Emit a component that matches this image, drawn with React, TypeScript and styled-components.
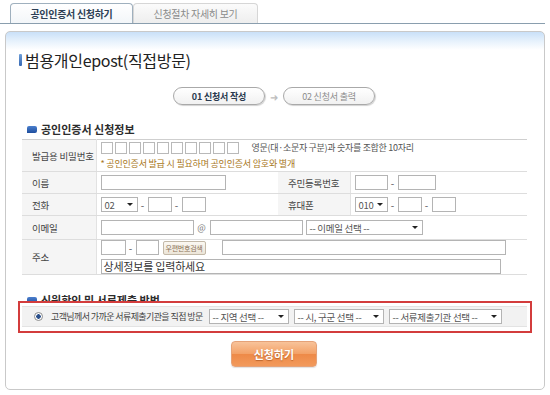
import React from 'react'
import styled, { createGlobalStyle } from 'styled-components'

const GlobalStyle = createGlobalStyle`
  html, body {
    margin: 0;
    padding: 0;
    background: #ffffff;
  }
  body {
    font-family: "Noto Sans CJK KR", "Noto Sans", sans-serif;
    color: #333;
  }
  * {
    box-sizing: border-box;
  }
`

const Page = styled.div`
  width: 550px;
  height: 395px;
  padding-top: 3px;
  overflow: hidden;
`

const TabBar = styled.div`
  display: flex;
  padding-left: 10px;
  margin-right: 5px;
  border-bottom: 1px solid #8a9eae;
`

const Tab = styled.div<{ $active?: boolean }>`
  width: ${({ $active }) => ($active ? '123px' : '125px')};
  height: 20px;
  display: flex;
  align-items: center;
  justify-content: center;
  font-size: 10px;
  letter-spacing: -0.3px;
  border: 1px solid ${({ $active }) => ($active ? '#9fb0be' : '#d6d6d6')};
  border-bottom: none;
  border-radius: 4px 4px 0 0;
  background: ${({ $active }) => ($active ? 'linear-gradient(#ffffff, #f3f6f9)' : 'linear-gradient(#fbfbfb, #eeeeee)')};
  color: ${({ $active }) => ($active ? '#2d3f55' : '#8a8a8a')};
  font-weight: ${({ $active }) => ($active ? 700 : 400)};
`

const Panel = styled.div`
  margin: 7px 5px 0 5px;
  height: 359px;
  border: 1px solid #c9c9c9;
  border-radius: 5px;
  background: linear-gradient(#c9e0f8 0px, #e6f1fc 9px, #ffffff 18px);
  padding: 18px 18px 0 16px;
`

const Title = styled.h1`
  margin: 0 0 0 -3px;
  display: flex;
  align-items: center;
  gap: 3px;
  font-size: 16px;
  font-weight: 400;
  color: #222;
  letter-spacing: -0.3px;
  line-height: 20px;
`

const TitleMark = styled.span`
  width: 3px;
  height: 12px;
  border-radius: 1px;
  background: linear-gradient(#6f9fd8, #3567b3);
`

const Steps = styled.div`
  display: flex;
  align-items: center;
  justify-content: center;
  gap: 2px;
  margin-top: 17px;
`

const StepPill = styled.div<{ $active?: boolean }>`
  width: 92px;
  height: 18px;
  border: 1px solid #a9a9a9;
  border-radius: 9px;
  background: linear-gradient(#ffffff, #f1f1f1);
  box-shadow: 1px 1px 1px rgba(0, 0, 0, 0.18);
  display: flex;
  align-items: center;
  justify-content: center;
  font-size: 9px;
  letter-spacing: -0.2px;
  color: ${({ $active }) => ($active ? '#2a3a4e' : '#8d8d8d')};
  font-weight: ${({ $active }) => ($active ? 700 : 400)};
`

const StepArrow = styled.span`
  color: #bdbdbd;
  font-size: 10px;
  width: 14px;
  text-align: center;
`

const SectionHead = styled.h2`
  margin: 17px 0 0 0;
  display: flex;
  align-items: center;
  gap: 4px;
  font-size: 11px;
  font-weight: 700;
  color: #2c2c2c;
  line-height: 14px;
  padding-left: 5px;
`

const SectionIcon = styled.span`
  width: 10px;
  height: 7px;
  border-radius: 2px 2px 2px 0;
  background: linear-gradient(#4b7fcd, #1e4e9e);
`

const FormTable = styled.table`
  width: 505px;
  margin-top: 3px;
  border-collapse: collapse;
  border-top: 1px solid #cfcfcf;
  border-bottom: 1px solid #cfcfcf;
  table-layout: fixed;
  font-size: 9.5px;
  letter-spacing: -0.2px;
`

const Th = styled.th`
  background: #f5f5f5;
  font-weight: 400;
  color: #444;
  text-align: left;
  padding: 0 0 0 10px;
  border-bottom: 1px solid #dddddd;
  border-right: 1px solid #e2e2e2;
`

const Td = styled.td<{ $h?: number }>`
  height: ${({ $h }) => $h ?? 22}px;
  padding: 0 0 0 4px;
  border-bottom: 1px solid #dddddd;
  color: #555;
`

const FieldRow = styled.div`
  display: flex;
  align-items: center;
  gap: 3px;
`

const Input = styled.div<{ $w: number }>`
  width: ${({ $w }) => $w}px;
  height: 15px;
  border: 1px solid #b4b4b4;
  background: #fff;
  flex: none;
`

const WideInput = styled.div`
  height: 15px;
  width: 400px;
  border: 1px solid #b4b4b4;
  padding-left: 2px;
  font-size: 11px;
  line-height: 13px;
  color: #333;
`

const Dash = styled.span`
  width: 4px;
  text-align: center;
  color: #555;
  font-size: 10px;
`

const Select = styled.div<{ $w: number }>`
  width: ${({ $w }) => $w}px;
  height: 15px;
  flex: none;
  border: 1px solid #b4b4b4;
  background: #fff;
  display: flex;
  align-items: center;
  justify-content: space-between;
  padding: 0 4px 0 3px;
  font-size: 9.5px;
  letter-spacing: -0.3px;
  color: #555;
  white-space: nowrap;
  &::after {
    content: '';
    border-left: 3px solid transparent;
    border-right: 3px solid transparent;
    border-top: 3px solid #222;
  }
`

const PwBoxes = styled.div`
  display: flex;
  gap: 2px;
`

const PwBox = styled.span`
  width: 12px;
  height: 12px;
  border: 1px solid #b9b9b9;
  background: #fff;
`

const Hint = styled.span`
  margin-left: 10px;
  font-size: 9px;
  color: #555;
  letter-spacing: -0.3px;
`

const Notice = styled.div`
  margin-top: 3px;
  font-size: 9px;
  color: #a87722;
  letter-spacing: -0.2px;
`

const At = styled.span`
  color: #777;
  font-size: 9px;
  width: 10px;
  text-align: center;
`

const ZipButton = styled.span`
  width: 43px;
  height: 14px;
  border: 1px solid #c3b9a8;
  border-radius: 2px;
  background: linear-gradient(#fbf8f2, #ece5d8);
  font-size: 7px;
  letter-spacing: -0.3px;
  color: #8a7256;
  display: flex;
  align-items: center;
  justify-content: center;
  margin: 0 13px 0 1px;
  flex: none;
`

const AddrStack = styled.div`
  display: flex;
  flex-direction: column;
  gap: 4px;
`

const MethodHead = styled(SectionHead)`
  margin-top: 18px;
`

const MethodBox = styled.div`
  position: relative;
  margin: -6px 0 0 -4px;
  width: 514px;
  height: 32px;
  border: 2px solid #d33c3c;
  background: #fff;
  padding: 3px 3px 0 2px;
`

const MethodRow = styled.div`
  height: 21px;
  background: #f2f2f2;
  border-top: 1px solid #e3e3e3;
  border-bottom: 1px solid #e3e3e3;
  display: flex;
  align-items: center;
  padding-left: 12px;
  gap: 5px;
  font-size: 9.5px;
  color: #444;
  letter-spacing: -0.2px;
`

const Radio = styled.span`
  width: 9px;
  height: 9px;
  border-radius: 50%;
  border: 1px solid #8e8e8e;
  background: radial-gradient(circle, #2a4f8a 0 2px, #ffffff 2.5px);
  margin-right: 3px;
`

const MethodText = styled.span`
  font-size: 9px;
  letter-spacing: -0.6px;
  margin-right: 1px;
`

const SubmitWrap = styled.div`
  display: flex;
  justify-content: center;
  margin-top: 8px;
`

const SubmitButton = styled.button`
  width: 86px;
  height: 26px;
  border: 1px solid #e5a278;
  border-radius: 4px;
  background: linear-gradient(#f8c39a 0%, #f3a268 48%, #ee8a48 52%, #f29a5c 100%);
  color: #ffffff;
  font-family: "Noto Sans CJK KR", sans-serif;
  font-size: 11px;
  font-weight: 700;
  text-shadow: 0 1px 1px rgba(150, 70, 20, 0.6);
  box-shadow: 0 1px 1px rgba(0, 0, 0, 0.12);
  padding: 0;
`

export default function App() {
  return (
    <>
      <GlobalStyle />
      <Page>
        <TabBar>
          <Tab $active>공인인증서 신청하기</Tab>
          <Tab>신청절차 자세히 보기</Tab>
        </TabBar>
        <Panel>
          <Title>
            <TitleMark />
            범용개인epost(직접방문)
          </Title>

          <Steps>
            <StepPill $active>01 신청서 작성</StepPill>
            <StepArrow>➜</StepArrow>
            <StepPill>02 신청서 출력</StepPill>
          </Steps>

          <SectionHead>
            <SectionIcon />
            공인인증서 신청정보
          </SectionHead>

          <FormTable>
            <colgroup>
              <col style={{ width: 74 }} />
              <col style={{ width: 182 }} />
              <col style={{ width: 72 }} />
              <col style={{ width: 177 }} />
            </colgroup>
            <tbody>
              <tr>
                <Th>발급용 비밀번호</Th>
                <Td $h={32} colSpan={3}>
                  <FieldRow>
                    <PwBoxes>
                      {Array.from({ length: 10 }).map((_, i) => (
                        <PwBox key={i} />
                      ))}
                    </PwBoxes>
                    <Hint>영문(대·소문자 구분)과 숫자를 조합한 10자리</Hint>
                  </FieldRow>
                  <Notice>* 공인인증서 발급 시 필요하며 공인인증서 암호와 별개</Notice>
                </Td>
              </tr>
              <tr>
                <Th>이름</Th>
                <Td>
                  <Input $w={125} />
                </Td>
                <Th>주민등록번호</Th>
                <Td>
                  <FieldRow>
                    <Input $w={33} />
                    <Dash>-</Dash>
                    <Input $w={38} />
                  </FieldRow>
                </Td>
              </tr>
              <tr>
                <Th>전화</Th>
                <Td>
                  <FieldRow>
                    <Select $w={37}>02</Select>
                    <Dash>-</Dash>
                    <Input $w={24} />
                    <Dash>-</Dash>
                    <Input $w={24} />
                  </FieldRow>
                </Td>
                <Th>휴대폰</Th>
                <Td>
                  <FieldRow>
                    <Select $w={33}>010</Select>
                    <Dash>-</Dash>
                    <Input $w={24} />
                    <Dash>-</Dash>
                    <Input $w={24} />
                  </FieldRow>
                </Td>
              </tr>
              <tr>
                <Th>이메일</Th>
                <Td $h={24} colSpan={3}>
                  <FieldRow>
                    <Input $w={93} />
                    <At>@</At>
                    <Input $w={93} />
                    <Select $w={117}>-- 이메일 선택 --</Select>
                  </FieldRow>
                </Td>
              </tr>
              <tr>
                <Th>주소</Th>
                <Td $h={35} colSpan={3}>
                  <AddrStack>
                    <FieldRow>
                      <Input $w={25} />
                      <Dash>-</Dash>
                      <Input $w={23} />
                      <ZipButton>우편번호검색</ZipButton>
                      <Input $w={284} />
                    </FieldRow>
                    <WideInput>상세정보를 입력하세요</WideInput>
                  </AddrStack>
                </Td>
              </tr>
            </tbody>
          </FormTable>

          <MethodHead>
            <SectionIcon />
            신원확인 및 서류제출 방법
          </MethodHead>
          <MethodBox>
            <MethodRow>
              <Radio />
              <MethodText>고객님께서 가까운 서류제출기관을 직접 방문</MethodText>
              <Select $w={80}>-- 지역 선택 --</Select>
              <Select $w={90}>-- 시, 구군 선택 --</Select>
              <Select $w={113}>-- 서류제출기관 선택 --</Select>
            </MethodRow>
          </MethodBox>

          <SubmitWrap>
            <SubmitButton>신청하기</SubmitButton>
          </SubmitWrap>
        </Panel>
      </Page>
    </>
  )
}
